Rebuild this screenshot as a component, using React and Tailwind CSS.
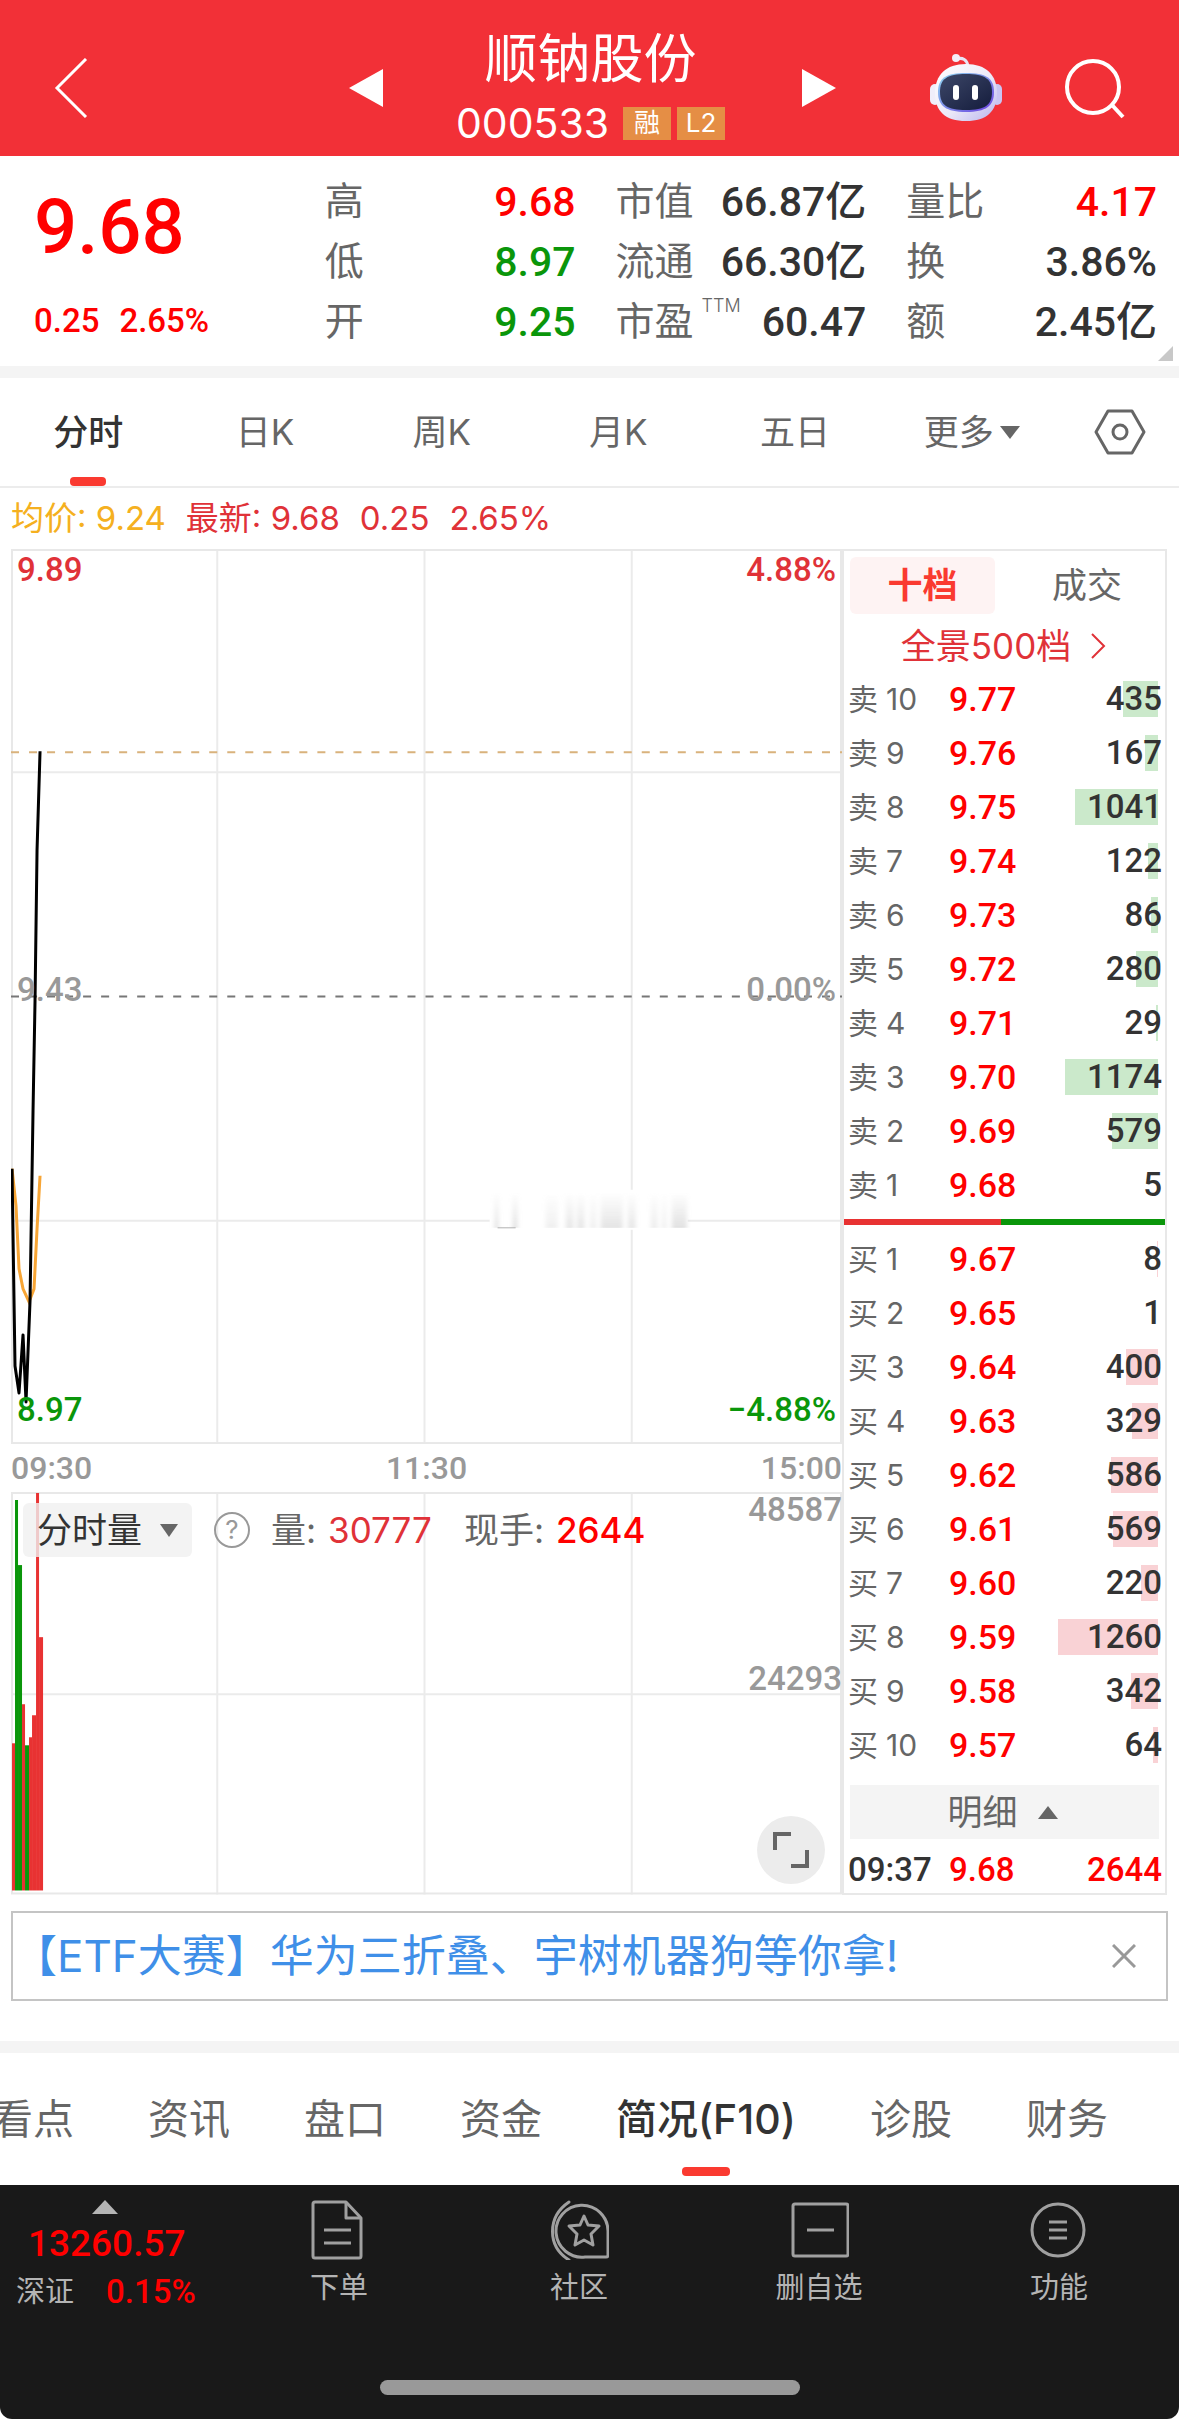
import clsx from 'clsx'

const stats = [
  [
    { label: '高', value: '9.68', color: 'text-[#ff0000]' },
    { label: '低', value: '8.97', color: 'text-[#0a960a]' },
    { label: '开', value: '9.25', color: 'text-[#0a960a]' },
  ],
  [
    { label: '市值', value: '66.87亿', color: 'text-[#333333]' },
    { label: '流通', value: '66.30亿', color: 'text-[#333333]' },
    { label: '市盈', sup: 'TTM', value: '60.47', color: 'text-[#333333]' },
  ],
  [
    { label: '量比', value: '4.17', color: 'text-[#ff0000]' },
    { label: '换', value: '3.86%', color: 'text-[#333333]' },
    { label: '额', value: '2.45亿', color: 'text-[#333333]' },
  ],
]

const periods = ['分时', '日K', '周K', '月K', '五日', '更多']

const asks = [
  ['10', '9.77', 435],
  ['9', '9.76', 167],
  ['8', '9.75', 1041],
  ['7', '9.74', 122],
  ['6', '9.73', 86],
  ['5', '9.72', 280],
  ['4', '9.71', 29],
  ['3', '9.70', 1174],
  ['2', '9.69', 579],
  ['1', '9.68', 5],
]

const bids = [
  ['1', '9.67', 8],
  ['2', '9.65', 1],
  ['3', '9.64', 400],
  ['4', '9.63', 329],
  ['5', '9.62', 586],
  ['6', '9.61', 569],
  ['7', '9.60', 220],
  ['8', '9.59', 1260],
  ['9', '9.58', 342],
  ['10', '9.57', 64],
]

const MAX_QTY = 1260

// x, top, width, direction
const volumeBars = [
  [1, 251, 3, 'up'],
  [4, 8, 3, 'down'],
  [7, 73, 4, 'down'],
  [11, 212, 3, 'up'],
  [14, 253, 4, 'down'],
  [18, 245, 3, 'up'],
  [21, 223, 4, 'up'],
  [25, 1, 3, 'up'],
  [28, 145, 4, 'up'],
]

const sections = ['看点', '资讯', '盘口', '资金', '简况(F10)', '诊股', '财务']

// x, width, opacity
const ghostMarks = [
  [51, 4, 0.5],
  [69, 5, 0.5],
  [102, 12, 0.25],
  [122, 8, 0.4],
  [133, 8, 0.4],
  [146, 7, 0.25],
  [157, 22, 0.45],
  [184, 8, 0.4],
  [207, 7, 0.3],
  [218, 5, 0.25],
  [228, 15, 0.5],
]

function RobotIcon() {
  return (
    <svg width="72" height="68" viewBox="0 0 72 68" aria-hidden="true">
      <defs>
        <linearGradient id="shell" x1="0" y1="0" x2="1" y2="1">
          <stop offset="0" stopColor="#ffffff" />
          <stop offset="0.55" stopColor="#ece9f8" />
          <stop offset="1" stopColor="#b9b4ee" />
        </linearGradient>
        <linearGradient id="rim" x1="0" y1="0" x2="1" y2="1">
          <stop offset="0" stopColor="#8fd8f0" />
          <stop offset="1" stopColor="#6a3fe0" />
        </linearGradient>
        <linearGradient id="face" x1="0" y1="0" x2="1" y2="1">
          <stop offset="0" stopColor="#3d4768" />
          <stop offset="1" stopColor="#141c3c" />
        </linearGradient>
      </defs>
      <path d="M26 5c7-2 11 1 12 7" fill="none" stroke="#e8e4f4" strokeWidth="3" />
      <circle cx="26" cy="4" r="4" fill="#f4eef8" />
      <rect x="0" y="30" width="10" height="21" rx="5" fill="#f0eefa" />
      <rect x="62" y="30" width="10" height="21" rx="5" fill="#c9c5f2" />
      <path d="M36 10c20 0 31 11 31 29S57 67 36 67 5 57 5 39s11-29 31-29z" fill="url(#shell)" />
      <path d="M36 19c20 0 28 5 28 19s-8 20-28 20S8 52 8 38s8-19 28-19z" fill="url(#rim)" />
      <path d="M36 20c19 0 26 5 26 18s-7 18-26 18S10 51 10 38s7-18 26-18z" fill="url(#face)" />
      <rect x="23" y="31" width="6" height="15" rx="3" fill="#fff" />
      <rect x="42" y="31" width="6" height="15" rx="3" fill="#fff" />
    </svg>
  )
}

function Header() {
  return (
    <header className="grid h-[156px] grid-cols-[1fr_auto_1fr] items-center bg-[#f23037] pt-5 pl-[6px] text-white">
      <button aria-label="返回" className="w-fit pl-12">
        <svg width="34" height="60" viewBox="0 0 34 60" fill="none" stroke="currentColor" strokeWidth="3">
          <path d="M32 1 3 30l29 29" />
        </svg>
      </button>
      <div className="flex w-[488px] items-center justify-between">
        <button aria-label="上一只">
          <svg width="34" height="38" viewBox="0 0 34 38" fill="currentColor">
            <path d="M34 0v38L0 19z" />
          </svg>
        </button>
        <div className="pt-1 pr-1 text-center">
          <h1 className="text-[53px] leading-[66px]">顺钠股份</h1>
          <div className="flex items-center justify-center gap-[6px] leading-[62px]">
            <span className="mr-2 text-[41px]">000533</span>
            <span className="h-[33px] w-12 bg-[#e58e45] text-[26px] leading-8">融</span>
            <span className="h-[33px] w-12 bg-[#e58e45] text-[26px] leading-8">L2</span>
          </div>
        </div>
        <button aria-label="下一只">
          <svg width="34" height="38" viewBox="0 0 34 38" fill="currentColor">
            <path d="M0 0v38l34-19z" />
          </svg>
        </button>
      </div>
      <div className="flex items-center justify-end gap-[62px] pr-[53px]">
        <button aria-label="智能助手">
          <RobotIcon />
        </button>
        <button aria-label="搜索">
          <svg width="62" height="62" viewBox="0 0 62 62" fill="none" stroke="currentColor" strokeWidth="4">
            <circle cx="29" cy="30" r="26" />
            <path d="m48 48 11 12" />
          </svg>
        </button>
      </div>
    </header>
  )
}

function Quote() {
  return (
    <section className="relative grid h-[210px] grid-cols-4 gap-x-10 pt-4 pr-[22px] pl-[34px] font-['Roboto','Noto_Sans_CJK_SC',sans-serif]">
      <div className="text-[#ff0000]">
        <div className="text-[76px] leading-[110px] font-medium">9.68</div>
        <div className="mt-[9px] flex gap-5 text-[33px] leading-[60px] font-medium">
          <span>0.25</span>
          <span>2.65%</span>
        </div>
      </div>
      {stats.map((group, i) => (
        <dl key={i}>
          {group.map((item) => (
            <div key={item.label} className="flex h-[60px] items-center justify-between">
              <dt className="flex text-[39px] leading-[60px] text-[#666666]">
                {item.label}
                {item.sup && <sup className="top-0 ml-2 font-['Inter',sans-serif] text-[18px] leading-7 font-light">{item.sup}</sup>}
              </dt>
              <dd className={clsx('text-[41px] leading-[60px] font-medium', item.color)}>{item.value}</dd>
            </div>
          ))}
        </dl>
      ))}
      <svg className="absolute right-[6px] bottom-[5px]" width="15" height="15" viewBox="0 0 15 15" aria-hidden="true">
        <path d="M15 0v15H0z" fill="#c8c8c8" />
      </svg>
    </section>
  )
}

function PeriodTabs() {
  return (
    <nav className="flex h-[110px] border-b-2 border-[#ececec] text-[35px] text-[#666666]">
      {periods.map((name, i) => (
        <button
          key={name}
          className={clsx('relative flex flex-1 items-center justify-center gap-[6px]', i === 0 && 'font-medium text-[#333333]')}
        >
          {name}
          {name === '更多' && (
            <svg width="20" height="13" viewBox="0 0 20 13" fill="#666666" aria-hidden="true">
              <path d="M0 0h20L10 13z" />
            </svg>
          )}
          {i === 0 && <span className="absolute bottom-0 h-[9px] w-9 rounded bg-[#fa3a30]" />}
        </button>
      ))}
      <button aria-label="设置" className="flex w-[119px] items-center justify-center">
        <svg width="52" height="46" viewBox="0 0 52 46" fill="none" stroke="#666666" strokeWidth="3">
          <path d="M14 2h24l12 21-12 21H14L2 23z" strokeLinejoin="round" />
          <circle cx="26" cy="23" r="7" />
        </svg>
      </button>
    </nav>
  )
}

function PriceChart() {
  return (
    <div className="relative">
      <svg className="block w-full" viewBox="0 0 830 894" fill="none" aria-label="分时走势">
        <g stroke="#ebebeb" strokeWidth="2">
          <path d="M206 0V894M413 0V894M620 0V894" />
          <path d="M0 223H830M0 671H830" />
          <rect x="1" y="1" width="828" height="892" stroke="#e8e8e8" />
        </g>
        <path d="M0 203H830" stroke="#d9b27c" strokeWidth="2" strokeDasharray="8 10" />
        <path d="M0 447H830" stroke="#777777" strokeWidth="2" strokeDasharray="8 10" />
        <defs>
          <linearGradient id="ghost" x1="0" y1="0" x2="0" y2="1">
            <stop offset="0" stopColor="#c4c4c4" stopOpacity="0" />
            <stop offset="1" stopColor="#c4c4c4" />
          </linearGradient>
          <filter id="soft" x="-10%" y="-10%" width="120%" height="120%">
            <feGaussianBlur stdDeviation="2 0" />
          </filter>
        </defs>
        <rect x="478" y="640" width="198" height="40" fill="#ffffff" />
        <g transform="translate(432 643)">
          <g filter="url(#soft)">
            {ghostMarks.map(([x, w, o]) => (
              <rect key={x} x={x} y="0" width={w} height="35" fill="url(#ghost)" opacity={o} />
            ))}
          </g>
          <path d="M54 35h18" stroke="#b0b0b0" strokeWidth="1" />
        </g>
        <path d="M1 619l4 37 3 63 4 20 6 13 5-13 3-60 3-53" stroke="#f7a535" strokeWidth="3" />
        <path d="M1 619l3 197 4 27 4-58 3 67 4-101 3-190 2-110 2-150 3-99" stroke="#000000" strokeWidth="3" strokeLinejoin="round" />
      </svg>
      <div className="absolute inset-0 flex flex-col justify-between px-[6px] pb-[13px] font-['Roboto',sans-serif] text-[33px] leading-[42px] font-medium">
        <div className="flex justify-between text-[#e03238]">
          <span>9.89</span>
          <span>4.88%</span>
        </div>
        <div className="flex justify-between text-[#999999]">
          <span>9.43</span>
          <span>0.00%</span>
        </div>
        <div className="flex justify-between text-[#0a960a]">
          <span>8.97</span>
          <span>−4.88%</span>
        </div>
      </div>
    </div>
  )
}

function VolumeChart() {
  return (
    <div className="relative">
      <svg className="block w-full" viewBox="0 0 830 402" fill="none" aria-label="分时成交量">
        <g stroke="#ebebeb" strokeWidth="2">
          <path d="M206 0V402M413 0V402M620 0V402" />
          <path d="M0 202H830" />
          <rect x="1" y="1" width="828" height="400" stroke="#e8e8e8" />
        </g>
        {volumeBars.map(([x, top, w, dir]) => (
          <rect key={x} x={x} y={top} width={w} height={398 - top} fill={dir === 'up' ? '#e83232' : '#0a960a'} />
        ))}
      </svg>
      <div className="absolute inset-x-3 top-[11px] flex h-[54px] items-center text-[35px] text-[#666666]">
        <button className="flex h-[54px] w-[169px] items-center justify-between rounded-md bg-[#f0f0f0]/80 px-[14px] text-[#333333]">
          分时量
          <svg width="18" height="13" viewBox="0 0 18 13" fill="#666666" aria-hidden="true">
            <path d="M0 0h18L9 13z" />
          </svg>
        </button>
        <button aria-label="说明" className="ml-[22px] size-9 rounded-full border-2 border-[#999999] text-[26px] leading-8 text-[#999999]">
          ?
        </button>
        <span className="ml-[21px]">量:</span>
        <span className="ml-3 text-[#e03238]">30777</span>
        <span className="ml-8">现手:</span>
        <span className="ml-3 font-medium text-[#ff0000]">2644</span>
      </div>
      <div className="absolute top-0 right-0 flex h-[205px] flex-col justify-between text-right font-['Roboto',sans-serif] text-[33px] leading-9 font-medium text-[#999999]">
        <span>48587</span>
        <span>24293</span>
      </div>
      <button aria-label="全屏" className="absolute right-[17px] bottom-[11px] flex size-[68px] items-center justify-center rounded-full bg-[#ececec]">
        <svg width="36" height="36" viewBox="0 0 36 36" fill="none" stroke="#666666" strokeWidth="4">
          <path d="M2 18V2h16M34 18v16H18" />
        </svg>
      </button>
    </div>
  )
}

function BookRows({ side, rows }) {
  return (
    <table className="w-full table-fixed">
      <tbody>
        {rows.map(([level, price, qty]) => (
          <tr key={level} className="h-[54px]">
            <th scope="row" className="w-[101px] text-left text-[30px] leading-[54px] font-normal text-[#666666]">
              {side === 'ask' ? '卖' : '买'}
              <span className="ml-2">{level}</span>
            </th>
            <td className="font-['Roboto',sans-serif] text-[34px] leading-[54px] font-medium text-[#ff0000]">{price}</td>
            <td className="relative text-right font-['Roboto',sans-serif] text-[33px] leading-[54px] font-medium text-[#333333]">
              <span
                className={clsx('absolute top-[9px] right-1 h-9', side === 'ask' ? 'bg-[#cbe9cb]' : 'bg-[#f9d2d5]')}
                style={{ width: Math.round((qty / MAX_QTY) * 100) }}
              />
              <span className="relative">{qty}</span>
            </td>
          </tr>
        ))}
      </tbody>
    </table>
  )
}

function OrderBook() {
  return (
    <aside className="w-[325px] border-2 border-[#e8e8e8]">
      <div className="mx-[6px] mt-[6px] flex h-[57px] text-[35px]">
        <button className="w-[145px] rounded-md bg-[#fef3f3] font-bold text-[#fa3a30]">十档</button>
        <button className="flex-1 pl-5 text-[#666666]">成交</button>
      </div>
      <a href="#depth" className="flex h-[58px] items-center justify-center gap-5 pt-[6px] pr-[2px] text-[35px] text-[#e03238]">
        全景500档
        <svg width="15" height="26" viewBox="0 0 15 26" fill="none" stroke="currentColor" strokeWidth="2" aria-hidden="true">
          <path d="m1 1 12 12L1 25" />
        </svg>
      </a>
      <div className="pr-[3px] pl-1">
        <BookRows side="ask" rows={asks} />
      </div>
      <div className="mt-[7px] flex h-[6px]">
        <span className="w-[49%] bg-[#e83232]" />
        <span className="flex-1 bg-[#0a960a]" />
      </div>
      <div className="mt-[7px] pr-[3px] pl-1">
        <BookRows side="bid" rows={bids} />
      </div>
      <button className="mt-[13px] ml-[6px] flex h-[54px] w-[309px] items-center justify-center gap-5 bg-[#f4f4f4] pr-1 text-[35px] text-[#666666]">
        明细
        <svg width="20" height="13" viewBox="0 0 20 13" fill="#666666" aria-hidden="true">
          <path d="M0 13h20L10 0z" />
        </svg>
      </button>
      <div className="flex h-[54px] items-center pt-2 pr-[3px] pl-1 font-['Roboto',sans-serif] text-[33px] font-medium text-[#ff0000]">
        <span className="w-[101px] text-[#333333]">09:37</span>
        <span>9.68</span>
        <span className="ml-auto">2644</span>
      </div>
    </aside>
  )
}

function Banner() {
  return (
    <div className="mx-[11px] mt-4 flex h-[90px] items-center justify-between border-2 border-[#c4c4c4] pr-[30px]">
      <a href="#etf" className="text-[44px] whitespace-nowrap text-[#3f8fe8]">
        【ETF大赛】华为三折叠、宇树机器狗等你拿!
      </a>
      <button aria-label="关闭">
        <svg width="24" height="24" viewBox="0 0 24 24" fill="none" stroke="#999999" strokeWidth="3">
          <path d="m1 1 22 22M23 1 1 23" />
        </svg>
      </button>
    </div>
  )
}

function SectionTabs() {
  return (
    <nav className="flex h-[132px] gap-[74px] overflow-hidden text-[41px] whitespace-nowrap text-[#666666]">
      {sections.map((name, i) => {
        const active = name === '简况(F10)'
        return (
          <button
            key={name}
            className={clsx('relative flex shrink-0 items-center justify-center pt-[2px]', i === 0 && '-ml-2', active && 'font-medium text-[#333333]')}
          >
            {name}
            {active && <span className="absolute bottom-[9px] h-[9px] w-12 rounded bg-[#fa3a30]" />}
          </button>
        )
      })}
    </nav>
  )
}

function ActionIcon({ name }) {
  return (
    <svg width="60" height="60" viewBox="0 0 60 60" fill="none" stroke="#a0a0a0" strokeWidth="3" strokeLinejoin="round">
      {name === 'order' && (
        <>
          <path d="M4 4q0-2 2-2h31l15 16v38q0 2-2 2H6q-2 0-2-2z" />
          <path d="M37 2v16h15M15 30h27M15 43h27" />
        </>
      )}
      {name === 'community' && (
        <>
          <path d="M59 31v24q0 2-2 2H36A26 26 0 1 1 59 31z" />
          <path d="M20 2C-2 17-2 46 20 60" strokeLinecap="round" />
          <path d="m35 16 4 9 11 1-8 8 2 11-9-5-9 5 2-11-8-8 11-1z" />
        </>
      )}
      {name === 'remove' && (
        <>
          <rect x="4" y="4" width="55" height="52" rx="2" />
          <path d="M18 30h27" />
        </>
      )}
      {name === 'menu' && (
        <>
          <circle cx="29" cy="30" r="26" />
          <path d="M20 22h18M20 30h18M20 38h18" />
        </>
      )}
    </svg>
  )
}

const actions = [
  { icon: 'order', label: '下单' },
  { icon: 'community', label: '社区' },
  { icon: 'remove', label: '删自选' },
  { icon: 'menu', label: '功能' },
]

function BottomBar() {
  return (
    <footer className="rounded-b-xl bg-[#191919]">
      <div className="flex h-[195px]">
        <button className="flex w-[219px] flex-col items-start pt-[15px] font-['Roboto','Noto_Sans_CJK_SC',sans-serif] font-medium text-[#ff0000]">
          <svg className="ml-[92px]" width="26" height="14" viewBox="0 0 26 14" fill="#b4b4b4" aria-hidden="true">
            <path d="M0 14h26L13 0z" />
          </svg>
          <span className="mt-1 ml-7 text-[37px] leading-[52px]">13260.57</span>
          <span className="ml-4 flex gap-8 text-[33px] leading-[44px]">
            <span className="text-[29px] font-normal text-[#b4b4b4]">深证</span>
            0.15%
          </span>
        </button>
        {actions.map((action) => (
          <button key={action.label} className="flex flex-1 flex-col items-center pt-[15px] text-[29px] leading-[56px] text-[#b4b4b4]">
            <ActionIcon name={action.icon} />
            {action.label}
          </button>
        ))}
      </div>
      <div className="flex justify-center pb-6">
        <span className="h-[15px] w-[420px] rounded-full bg-[#999999]" />
      </div>
    </footer>
  )
}

export default function App() {
  return (
    <div className="bg-white font-['Inter','Noto_Sans_CJK_SC',sans-serif]">
      <Header />
      <Quote />
      <div className="h-3 bg-[#f4f4f4]" />
      <PeriodTabs />
      <main>
        <div className="flex h-[61px] items-center gap-5 pl-[11px] text-[33px] text-[#e03238]">
          <span className="text-[#f5b020]">均价: 9.24</span>
          <span>最新: 9.68</span>
          <span>0.25</span>
          <span>2.65%</span>
        </div>
        <div className="flex pr-3 pl-[11px]">
          <div className="flex-1">
            <PriceChart />
            <div className="flex h-12 items-center justify-between font-['Roboto',sans-serif] text-[32px] font-medium text-[#999999]">
              <span>09:30</span>
              <span>11:30</span>
              <span>15:00</span>
            </div>
            <VolumeChart />
          </div>
          <OrderBook />
        </div>
        <Banner />
        <div className="mt-10 h-3 bg-[#f4f4f4]" />
        <SectionTabs />
      </main>
      <BottomBar />
    </div>
  )
}
